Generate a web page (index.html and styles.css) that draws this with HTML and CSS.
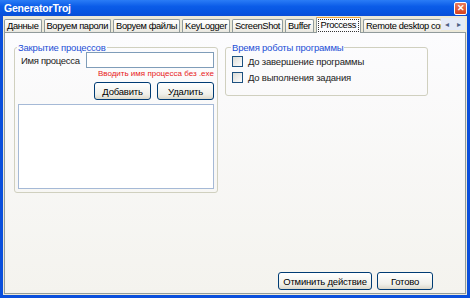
FILE: index.html
```html
<!DOCTYPE html>
<html lang="ru">
  <head>
    <meta charset="UTF-8" />
    <title>GeneratorTroj</title>
    <link rel="stylesheet" href="styles.css">
  </head>
  <body>
    <div class="window">
      <div class="titlebar">
        <span class="title">GeneratorTroj</span>
        <span class="close">&#x2715;</span>
      </div>

      <div class="frame">
        <div class="tabs">
          <div class="tab-list">
            <div class="tab">Данные</div>
            <div class="tab">Воруем пароли</div>
            <div class="tab">Воруем файлы</div>
            <div class="tab">KeyLogger</div>
            <div class="tab">ScreenShot</div>
            <div class="tab">Buffer</div>
            <div class="tab active"><span class="focus">Proccess</span></div>
            <div class="tab cut">Remote desktop cor</div>
          </div>
          <div class="scroller">
            <span>&#x25C2;</span>
            <span>&#x25B8;</span>
          </div>
        </div>

        <div class="panel">
          <div class="groups">
            <fieldset class="group group-process">
              <legend>Закрытие процессов</legend>
              <div class="row">
                <label for="proc_name">Имя процесса</label>
                <input type="text" id="proc_name" />
              </div>
              <div class="hint">Вводить имя процесса без .exe</div>
              <div class="button-row">
                <button>Добавить</button>
                <button>Удалить</button>
              </div>
              <div class="listbox"></div>
            </fieldset>

            <fieldset class="group group-time">
              <legend>Время роботы программы</legend>
              <label class="check"><span class="box"></span>До завершение программы</label>
              <label class="check"><span class="box"></span>До выполнения задания</label>
            </fieldset>
          </div>

          <div class="footer">
            <button class="wide">Отминить действие</button>
            <button class="ok">Готово</button>
          </div>
        </div>
      </div>
    </div>
  </body>
</html>
```

FILE: styles.css
```css
body {
  margin: 0;
  padding: 0;
  font-family: "Liberation Sans", Arial, sans-serif;
  font-size: 9.5px;
  color: #000;
}

.window {
  width: 470px;
  height: 298px;
  background: #0a4fdc;
  display: flex;
  flex-direction: column;
  box-sizing: border-box;
}

.titlebar {
  height: 16px;
  display: flex;
  align-items: center;
  justify-content: space-between;
  padding: 0 3px 0 4px;
  background: linear-gradient(#2a7cf6, #0b5ce8 40%, #0654e0 80%, #0a4ed6);
}

.title {
  color: white;
  font-weight: bold;
  font-size: 10.5px;
  letter-spacing: -0.2px;
}

.close {
  width: 11px;
  height: 11px;
  border: 1px solid #fff;
  border-radius: 2px;
  background: linear-gradient(#e97b5c, #d8431f);
  color: white;
  font-size: 9px;
  font-weight: bold;
  line-height: 11px;
  text-align: center;
}

.frame {
  flex: 1;
  margin: 0 3px 3px 3px;
  background: #ece9d8;
  display: flex;
  flex-direction: column;
  padding: 1px;
}

.tabs {
  display: flex;
  align-items: flex-end;
  height: 15px;
}

.tab-list {
  flex: 1;
  min-width: 0;
  display: flex;
  align-items: flex-end;
  gap: 2px;
  overflow: hidden;
  height: 16px;
  margin-bottom: -1px;
}

.tab {
  height: 13px;
  line-height: 13px;
  padding: 0 2px;
  border: 1px solid #919b9c;
  border-bottom: none;
  border-radius: 2px 2px 0 0;
  background: linear-gradient(#ffffff, #f4f3ee 60%, #e6e4dc);
  font-size: 9.3px;
  white-space: nowrap;
  letter-spacing: -0.35px;
  flex-shrink: 0;
}

.tab.active {
  height: 15px;
  background: #fcfcfe;
  border-top: 2px solid #f2a73a;
  padding: 0 1px;
  line-height: 14px;
  position: relative;
  z-index: 1;
}

.tab.active .focus {
  border: 1px dotted #333;
  padding: 0 2px;
  line-height: 11px;
  display: inline-block;
}

.tab.cut {
  flex-shrink: 1;
  overflow: hidden;
  min-width: 0;
  border-right: none;
}

.scroller {
  width: 24px;
  height: 12px;
  margin: 0 1px 2px 0;
  background: #e4ebf8;
  display: flex;
  justify-content: space-around;
  align-items: center;
  font-size: 8px;
  color: #4d6185;
}

.panel {
  flex: 1;
  background: linear-gradient(#fcfcfe, #f4f3ee);
  border: 1px solid #919b9c;
  display: flex;
  flex-direction: column;
  padding: 10px 8px 2px 9px;
}

.groups {
  display: flex;
  align-items: flex-start;
  gap: 7px;
}

.group {
  margin: 0;
  border: 1px solid #d0d0bf;
  border-radius: 3px;
  box-sizing: border-box;
}

.group legend {
  color: #1c4fd6;
  padding: 0 1px;
  margin-left: -1px;
  font-size: 9.5px;
  line-height: 9px;
  white-space: nowrap;
  letter-spacing: -0.2px;
}

.group-process {
  width: 204px;
  height: 150px;
  padding: 0 3px;
}

.group-time {
  width: 203px;
  height: 53px;
  padding: 1px 6px 0 6px;
}

.row {
  display: flex;
  justify-content: space-between;
  align-items: center;
  padding-left: 3px;
  margin-top: 0;
}

.row label {
  font-size: 9.5px;
  letter-spacing: -0.3px;
  color: #222;
  white-space: nowrap;
}

.row input {
  width: 128px;
  height: 16px;
  box-sizing: border-box;
  border: 1px solid #7f9db9;
  padding: 0;
}

.hint {
  text-align: right;
  color: #e8201a;
  font-size: 8px;
  margin-top: 1px;
  line-height: 10px;
  white-space: nowrap;
}

.button-row {
  display: flex;
  justify-content: flex-end;
  gap: 6px;
  margin-top: 3px;
}

button {
  font-family: "Liberation Sans", Arial, sans-serif;
  font-size: 9.5px;
  letter-spacing: -0.2px;
  height: 18px;
  width: 57px;
  padding: 0;
  border: 1px solid #003c74;
  border-radius: 3px;
  background: linear-gradient(#ffffff, #f0f0ea 70%, #dcd8ca);
  color: #000;
  white-space: nowrap;
}

.listbox {
  margin-top: 4px;
  width: 196px;
  height: 85px;
  box-sizing: border-box;
  border: 1px solid #a5b9d6;
  background: white;
}

.check {
  display: flex;
  align-items: center;
  gap: 5px;
  height: 16px;
  font-size: 9.5px;
  letter-spacing: -0.2px;
  color: #222;
  white-space: nowrap;
}

.box {
  width: 11px;
  height: 11px;
  box-sizing: border-box;
  border: 1px solid #1c5180;
  background: linear-gradient(135deg, #dcdcd7, #fdfdfd);
}

.footer {
  margin-top: auto;
  display: flex;
  justify-content: flex-end;
  gap: 5px;
  padding-right: 24px;
  margin-bottom: 1px;
}

.footer .wide {
  width: 94px;
}

.footer .ok {
  width: 56px;
}
```
